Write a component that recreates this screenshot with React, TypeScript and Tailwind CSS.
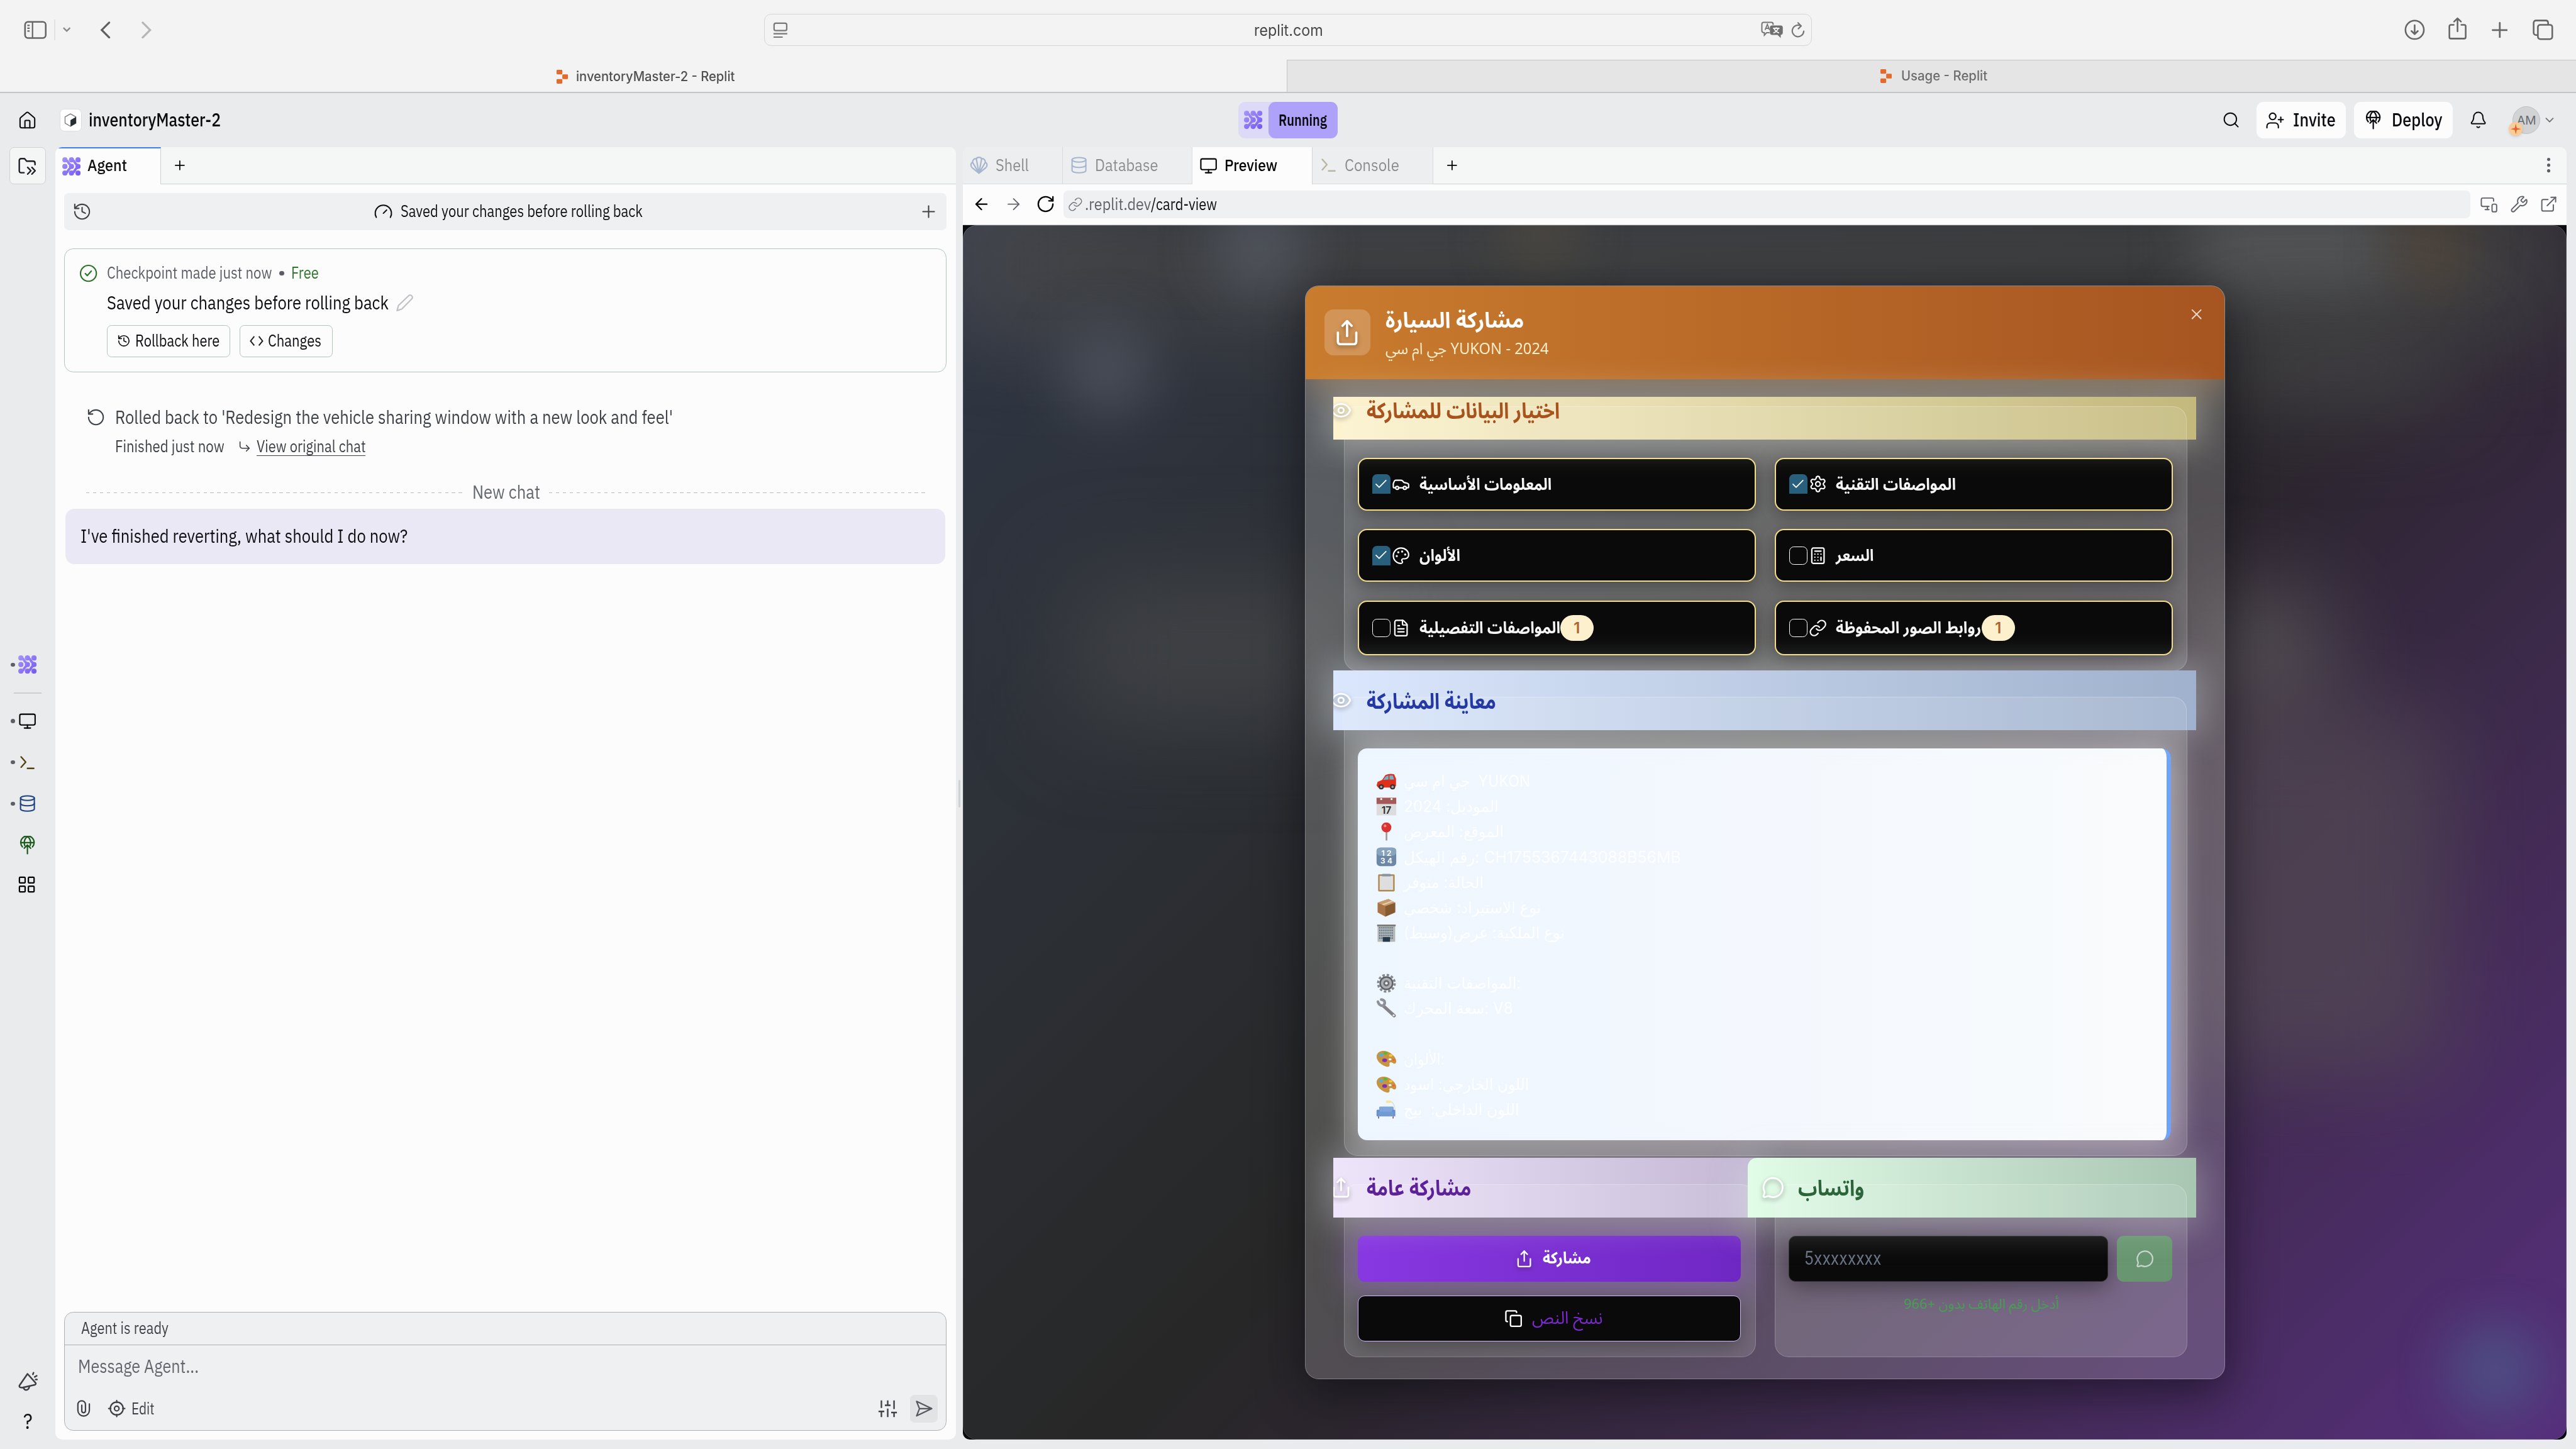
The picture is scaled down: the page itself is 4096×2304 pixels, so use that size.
import React, { useLayoutEffect, useRef } from "react";
import {
  ArrowLeft, ArrowRight, Bell, Calculator, Car, Check, ChevronDown,
  Copy, CornerDownRight, Database, EllipsisVertical, ExternalLink, Eye, FileText, Gauge, History, House,
  LayoutGrid, Link, MessageCircle, Monitor, MonitorSmartphone, Palette, Plus,
  RotateCcw, RotateCw, Search, Settings, Share, UserPlus, Wrench, X,
} from "lucide-react";

/* Text line condensed or widened to an exact advance width. */
function T({ w, className = "", children }: { w: number; className?: string; children: React.ReactNode }) {
  const outer = useRef<HTMLSpanElement>(null);
  const inner = useRef<HTMLSpanElement>(null);
  useLayoutEffect(() => {
    const o = outer.current;
    const i = inner.current;
    if (!o || !i) return;
    i.style.transform = "none";
    const k = o.getBoundingClientRect().width / i.getBoundingClientRect().width;
    i.style.transform = `scaleX(${k})`;
  }, [w]);
  return (
    <span ref={outer} className={`inline-block shrink-0 text-left whitespace-pre ${className}`} style={{ width: w }}>
      <span ref={inner} className="inline-block origin-left">{children}</span>
    </span>
  );
}

const AR = "font-['SF_Arabic','Noto_Sans_Arabic','DejaVu_Sans',sans-serif]";
const SF = "font-['Inter','Roboto',sans-serif]";
const ICON_SHADOW = "drop-shadow-[0_2px_2px_rgba(0,0,0,.35)]";

function AgentIcon({ size = 16 }: { size?: number }) {
  return (
    <svg width={size} height={size} viewBox="0 0 16 16" className="shrink-0">
      <defs>
        <linearGradient id="ag" gradientUnits="userSpaceOnUse" x1="0" y1="0" x2="16" y2="16">
          <stop offset="0" stopColor="#a596fa" />
          <stop offset="1" stopColor="#7457f3" />
        </linearGradient>
      </defs>
      <g fill="url(#ag)">
        {[2.3, 8, 13.7].map((x) => [2.3, 8, 13.7].map((y) => <circle key={`${x}-${y}`} cx={x} cy={y} r="2.25" />))}
      </g>
      <g stroke="url(#ag)" strokeWidth="2.1" fill="none" strokeLinejoin="round">
        <path d="M2.300 2.300 4.400 3.200Q5.600 6 8.800 8 5.600 10 4.400 12.800L2.300 13.700" />
        <path d="M8 2.300 10.100 3.200Q11.300 6 14.300 8 11.300 10 10.100 12.800L8 13.700" />
      </g>
    </svg>
  );
}

function ReplitLogo() {
  return (
    <svg width="10" height="12" viewBox="0 0 10 12" className="shrink-0">
      <g fill="#e4692b">
        <rect x="0" y="0" width="5" height="4" rx="0.8" />
        <rect x="5" y="4" width="5" height="4" rx="0.8" />
        <rect x="0" y="8" width="5" height="4" rx="0.8" />
      </g>
    </svg>
  );
}

function DeployIcon({ size = 16 }: { size?: number }) {
  return (
    <svg width={size} height={size} viewBox="0 0 16 16" fill="none" stroke="currentColor" strokeWidth="1.2" strokeLinecap="round" strokeLinejoin="round" className="shrink-0">
      <path d="M3.600 9.600a5.800 5.800 0 1 1 8.800 0" />
      <path d="M2.400 6h11.200M5.700 8.600C4.600 5.600 5.600 2 8 .6c2.400 1.400 3.400 5 2.300 8" />
      <path d="M8 15.600V8M5.200 10.800 8 8l2.800 2.800" />
    </svg>
  );
}

function ShellIcon() {
  return (
    <svg width="16" height="16" viewBox="0 0 16 16" fill="none" stroke="currentColor" strokeWidth="1.200" strokeLinejoin="round" className="shrink-0">
      <path d="M8 15 2.200 10.300C.500 9 .700 6 2.500 5.600 2.400 3.400 4 2 5.700 2.500 6.300.700 9.700.700 10.300 2.500 12 2 13.600 3.400 13.500 5.600 15.300 6 15.500 9 13.800 10.300z" />
      <path d="M8 15 2.500 5.600M8 15 5.700 2.500M8 15l2.300-12.500M8 15l5.500-9.400" />
    </svg>
  );
}

function ConsoleIcon() {
  return (
    <svg width="16" height="16" viewBox="0 0 16 16" fill="none" stroke="currentColor" strokeWidth="1.300" strokeLinecap="round" strokeLinejoin="round" className="shrink-0">
      <path d="M2.500 3 6.500 7.500 2.500 12M8 13h5.500" />
    </svg>
  );
}

function FolderIcon() {
  return (
    <svg width="16" height="16" viewBox="0 0 16 16" fill="none" stroke="#1d2026" strokeWidth="1.300" strokeLinecap="round" strokeLinejoin="round">
      <path d="M5 14H2.500C1.500 14 .9 13.400.9 12.500V3.300C.9 2.400 1.500 1.800 2.500 1.800h3l1.800 2.200h5.600c1 0 1.700.7 1.700 1.700V7" />
      <path d="M8.200 9.400l2.800 2.900-2.800 2.900M11.900 9.400l2.800 2.900-2.800 2.900" />
    </svg>
  );
}

function MegaphoneIcon() {
  return (
    <svg width="17" height="17" viewBox="0 0 16 16" fill="none" stroke="#3c3f45" strokeWidth="1.300" strokeLinecap="round" strokeLinejoin="round">
      <path d="M7.600 1.800 1 11.300c-.3.600 0 1.400.7 1.600l1.500.2 10.300-2.300c.8-.2 1-.9.800-1.500z" />
      <path d="M4.300 12.900c.6 3 4.300 2.900 4.900-1M12 2.200l.5-1.300M13.500 4.300l1.600-.9M14.200 6.400h1.200" />
    </svg>
  );
}

/* Small colour pictograms of the share text. */
const pictograms: Record<string, React.ReactNode> = {
  car: (
    <>
      <path d="M.5 14 1.500 10.500 6 8.500 9 4Q13 2 17.500 3.200L19.300 7.500V14.500L17 16H2Z" fill="#e0301c" />
      <path d="M7 8.500 9.700 5 12 4.200v4zM13 4.200h3.200l1.200 4H13z" fill="#6fb4c9" />
      <circle cx="5" cy="15.300" r="2.500" fill="#3b3434" /><circle cx="16" cy="15.300" r="2.500" fill="#3b3434" />
      <circle cx="5" cy="15.300" r="1.100" fill="#aaa" /><circle cx="16" cy="15.300" r="1.100" fill="#aaa" />
    </>
  ),
  calendar: (
    <>
      <rect x=".5" y="1.500" width="19" height="17" fill="#dcdcdc" />
      <rect x=".5" y="1.500" width="19" height="6" fill="#a45a58" />
      <text x="10" y="16.800" fontSize="9.500" textAnchor="middle" fill="#2b2b2b" fontFamily="Inter" fontWeight="600">17</text>
      <circle cx="5" cy="2.800" r="1" fill="#fff" /><circle cx="15" cy="2.800" r="1" fill="#fff" />
    </>
  ),
  pin: (
    <>
      <rect x="9.300" y="8" width="1.600" height="10.500" fill="#a5958f" />
      <circle cx="10" cy="5.800" r="4.800" fill="#d9342f" /><circle cx="8.700" cy="4.400" r="1.300" fill="#f08a85" />
    </>
  ),
  numbers: (
    <>
      <rect x=".5" y="1" width="19" height="18" rx="3.500" fill="#6d88a6" />
      <rect x=".5" y="1" width="19" height="8" rx="3.500" fill="#88a3be" />
      <text x="10" y="9" fontSize="7.500" textAnchor="middle" fill="#fff" fontFamily="Inter" fontWeight="600">1 2</text>
      <text x="10" y="16.600" fontSize="7.500" textAnchor="middle" fill="#fff" fontFamily="Inter" fontWeight="600">3 4</text>
    </>
  ),
  clipboard: (
    <>
      <rect x="2" y="2" width="16" height="16.500" rx="1" fill="#b08a4e" />
      <rect x="3.500" y="3.500" width="13" height="13.500" fill="#dedede" /><rect x="5.500" y="1.500" width="9" height="2.500" rx="1" fill="#8b93a0" />
    </>
  ),
  box: (
    <>
      <path d="M1.500 5 12 1.500 18.500 5V14.500L9 18.500 1.500 14.500z" fill="#a87446" />
      <path d="M9 8.300 18.500 5v9.500L9 18.500z" fill="#865a33" />
      <path d="M1.500 5 12 1.500 18.500 5 9 8.300z" fill="#c99c6d" /><path d="M5.500 6.700 15 3.200l1.500.8L7.200 7.500z" fill="#e5cfb0" />
    </>
  ),
  building: (
    <>
      <rect x="1.500" y="2" width="17" height="16.500" fill="#b3b6b2" />
      <path d="M3 5h14M3 7.500h14M3 10h14M3 12.500h14M3 15h14" stroke="#55718a" strokeWidth="1.300" strokeDasharray="1.200 .8" />
      <rect x="1" y="2" width="18" height="1.500" fill="#77756f" /><rect x="6.500" y="14" width="7" height="4.500" fill="#26394b" />
    </>
  ),
  gear: (
    <>
      <circle cx="10" cy="10" r="8" fill="none" stroke="#85888c" strokeWidth="2.200" strokeDasharray="2.400 1.790" />
      <circle cx="10" cy="10" r="6" fill="#aeb0b3" stroke="#5e6164" strokeWidth="1.500" />
      <circle cx="10" cy="10" r="3" fill="#6c6f73" /><circle cx="10" cy="10" r="1.300" fill="#eee" />
    </>
  ),
  wrench: (
    <>
      <path d="M7 7.500 17.500 17" stroke="#85838a" strokeWidth="3.200" strokeLinecap="round" />
      <path d="M1.800 3.500Q3 7.500 6.500 7.500 9 6 8.200 3.200 7 1.500 5 1.500" stroke="#8f9198" strokeWidth="2.600" fill="none" strokeLinecap="round" />
      <circle cx="17" cy="16.600" r="1" fill="#e8e8ee" />
    </>
  ),
  palette: (
    <>
      <path d="M.6 7C1.600 2 8 1.500 12 3.500c4.500 2.200 8 6.500 7.500 9.500-.4 2.200-2.300 2.200-3.500 1-1.500-1.300-3.500-.5-3 1.200.6 2-1 3.300-3.500 2.300C4 15.500 0 11.500.6 7z" fill="#c9943f" />
      <ellipse cx="5" cy="6.500" rx="2" ry="1.500" fill="#4db1de" /><ellipse cx="9" cy="4.600" rx="1.900" ry="1.300" fill="#55b934" />
      <ellipse cx="14.200" cy="6.800" rx="1.800" ry="1.200" fill="#eec93f" /><ellipse cx="8.300" cy="11.500" rx="2.300" ry="1.700" fill="#7a2fc0" />
      <ellipse cx="17" cy="11" rx="1.500" ry="1" fill="#e8663f" /><ellipse cx="13.500" cy="10.500" rx="1.500" ry="1" fill="#f2f6fc" />
    </>
  ),
  sofa: (
    <>
      <path d="M14 2.200Q19 3 18.700 17" fill="none" stroke="#dcdad2" strokeWidth=".8" /><rect x="9.500" y="1" width="5" height="2.500" rx="1" fill="#f7e49e" />
      <rect x="3" y="7" width="14" height="7" rx="1" fill="#7fa6dc" /><rect x=".5" y="10" width="3" height="6.500" rx="1" fill="#6690cc" />
      <rect x="15.500" y="10" width="3" height="6.500" rx="1" fill="#6690cc" /><rect x="2" y="12" width="15" height="4.500" fill="#7199d4" />
      <path d="M2.500 16.500v2M16.500 16.500v2" stroke="#7c6142" strokeWidth="1" />
    </>
  ),
};

const shareLines: ([string, string, number] | null)[] = [
  ["car", "جي ام سي  YUKON", 110],
  ["calendar", "الموديل: 2024", 82.5],
  ["pin", "الموقع: المعرض", 87],
  ["numbers", "رقم الهيكل: CH1755367443088B56MB", 241],
  ["clipboard", "الحالة: متوفر", 69.5],
  ["box", "نوع الاستيراد: شخصي", 119.5],
  ["building", "نوع الملكية: عرض(وسيط)", 140],
  null,
  ["gear", "المواصفات التقنية:", 102],
  ["wrench", "سعة المحرك: V8", 95],
  null,
  ["palette", "الألوان:", 35.5],
  ["palette", "اللون الخارجي: اسود", 109],
  ["sofa", "اللون الداخلي:  بيج", 100.5],
];

type Option = { icon: typeof Car; label: string; w: number; on: boolean; badge?: boolean };
const options: Option[] = [
  { icon: Car, label: "المعلومات الأساسية", w: 115, on: true },
  { icon: Settings, label: "المواصفات التقنية", w: 104.5, on: true },
  { icon: Palette, label: "الألوان", w: 35.5, on: true },
  { icon: Calculator, label: "السعر", w: 33, on: false },
  { icon: FileText, label: "المواصفات التفصيلية", w: 122.5, on: false, badge: true },
  { icon: Link, label: "روابط الصور المحفوظة", w: 126.5, on: false, badge: true },
];

function OptionCard({ icon: Icon, label, w, on, badge }: Option) {
  return (
    <div className={`flex ${badge ? "h-12" : "h-[46px]"} items-center rounded-lg border-[1.5px] border-[#f3dd85] bg-[#0a0a0a] pl-[11.500px] shadow-[0_4px_14px_rgba(40,40,40,.5)]`}>
      {on ? (
        <span className="flex h-[17px] w-4 items-center justify-center rounded-t bg-[#285f7c] text-white"><Check size={13} strokeWidth={1.800} /></span>
      ) : (
        <span className="h-4 w-4 rounded border border-white" />
      )}
      <Icon size={16} strokeWidth={1.800} className="ml-px text-white" />
      <T w={w} className={`mt-px ml-2 text-[14px] leading-5 font-bold text-[#f6f6f6] ${AR}`}>{label}</T>
      {badge && <span className={`flex h-[22px] w-[29px] items-center justify-center rounded-full bg-[#fdf1cd] text-[13px] font-semibold text-[#b0622e] ${SF}`}>1</span>}
    </div>
  );
}

function BrowserChrome() {
  return (
    <>
      <div className="flex h-[52px] shrink-0 items-center bg-[#f3f3f3] text-[#6a6a6a]">
        <svg width="20" height="16" viewBox="0 0 20 16" fill="none" stroke="#666" strokeWidth="1.400" className="ml-[21px]">
          <rect x="1" y="1" width="18" height="14" rx="2.5" /><path d="M7.500 1v14M3 4h2M3 6.500h2M3 9h2" strokeWidth="1.200" />
        </svg>
        <span className="ml-[6px] h-[18px] w-px bg-[#e2e2e2]" />
        <ChevronDown size={10} strokeWidth={3.2} className="ml-[5px] text-[#8a8a8a]" />
        <svg width="9" height="15" viewBox="0 0 9 15" fill="none" stroke="#5f5f5f" strokeWidth="1.700" strokeLinecap="round" className="ml-6"><path d="M8 1 1.500 7.500 8 14" /></svg>
        <svg width="9" height="15" viewBox="0 0 9 15" fill="none" stroke="#b5b5b5" strokeWidth="1.700" strokeLinecap="round" className="ml-[27px]"><path d="M1 1 7.500 7.500 1 14" /></svg>
        <div className="ml-[532.500px] flex h-7 w-[911px] items-center rounded-md border border-[#d5d5d5]">
          <svg width="13" height="14" viewBox="0 0 13 14" fill="none" stroke="#777" strokeWidth="1.200" className="ml-[7px]">
            <rect x="1" y="1" width="11" height="6.500" rx="1.500" /><path d="M.5 10.200h12M.5 13.200h8" />
          </svg>
          <T w={60} className={`mt-px ml-[405.500px] text-[13.500px] text-[#484848] ${SF}`}>replit.com</T>
          <svg width="20" height="15" viewBox="0 0 20 15" className="ml-[381px]">
            <path d="M2.500.8h6.400c1 0 1.700.7 1.700 1.700V3M7.500 9.800H5L3 12V9.800H2.500C1.500 9.800.8 9 .8 8.100V2.500C.8 1.500 1.500.8 2.500.8" fill="none" stroke="#777" strokeWidth="1.100" />
            <path d="M3.600 7.500 5.600 2.600 7.500 7.500M4.300 6h2.500" fill="none" stroke="#777" strokeWidth="1" />
            <path d="M9.500 3.500h7.700c1.200 0 1.800.7 1.800 1.800v4.600c0 1.100-.6 1.800-1.800 1.800V14.500L14.500 11.700h-5C8.400 11.700 7.800 11 7.800 9.900V5.300c0-1.100.6-1.800 1.700-1.800z" fill="#6f6f6f" />
            <path d="M10.500 6h5.600M13.300 5v1M15 6Q14 9 10.800 10M11.500 6.300Q12.500 9 15.800 10" stroke="#f3f3f3" strokeWidth="1" fill="none" />
          </svg>
          <svg width="12" height="14" viewBox="0 0 12 14" fill="none" stroke="#777" strokeWidth="1.200" strokeLinecap="round" className="ml-[6px]">
            <path d="M8.500 3.400A5 5 0 1 0 11 8M6 .700 8.700 3.400 6.300 5.800" />
          </svg>
        </div>
        <svg width="18" height="18" viewBox="0 0 18 18" fill="none" stroke="#666" strokeWidth="1.400" strokeLinecap="round" strokeLinejoin="round" className="ml-[515.500px]">
          <circle cx="9" cy="9" r="8" /><path d="M9 5v7.500M6.200 10 9 12.700 11.800 10" />
        </svg>
        <svg width="16" height="20" viewBox="0 0 16 20" fill="none" stroke="#666" strokeWidth="1.400" strokeLinecap="round" strokeLinejoin="round" className="-mt-0.5 ml-[20px]">
          <path d="M4.700 6.800H2.200c-.8 0-1.300.5-1.300 1.300v9.400c0 .8.500 1.300 1.300 1.300h11.600c.8 0 1.300-.5 1.300-1.300V8.100c0-.8-.5-1.300-1.300-1.300h-2.500M8 12.500V1.200M5 4 8 1.200 11 4" />
        </svg>
        <svg width="14" height="14" viewBox="0 0 14 14" stroke="#666" strokeWidth="1.500" strokeLinecap="round" className="ml-[21.500px]"><path d="M7 .8v12.400M.8 7h12.400" /></svg>
        <svg width="18" height="18" viewBox="0 0 18 18" fill="none" stroke="#666" strokeWidth="1.400" className="ml-[22px]">
          <path d="M4.500 13.500H3C1.700 13.500.9 12.700.9 11.500V3C.9 1.700 1.700.9 3 .9h8.500c1.200 0 2 .8 2 2.100v1.500" /><rect x="4.600" y="4.600" width="12.500" height="12.500" rx="2" />
        </svg>
      </div>
      <div className="flex h-7 shrink-0 bg-[#f3f3f3]">
        <div className="flex w-[1119px] items-center justify-center gap-[7px] pt-px pl-1">
          <ReplitLogo />
          <T w={138} className={`text-[11.500px] font-medium text-[#505050] ${SF}`}>inventoryMaster-2 - Replit</T>
        </div>
        <div className="flex flex-1 items-center justify-center gap-[8px] border-t border-l border-[#c6c6c6] bg-[#e5e5e5] pl-1">
          <ReplitLogo />
          <T w={75} className={`text-[11.500px] font-medium text-[#6d6d6d] ${SF}`}>Usage - Replit</T>
        </div>
      </div>
      <div className="h-px shrink-0 bg-[#c4c5c6]" />
    </>
  );
}

function Header() {
  return (
    <div className="flex h-[47px] shrink-0 items-center text-[#0b0c0f]">
      <House size={17} strokeWidth={1.600} className="ml-[15.500px]" />
      <span className="ml-[19.500px] flex h-5 w-[19px] items-center justify-center rounded border border-[#dcdddf] bg-white">
        <svg width="11" height="12" viewBox="0 0 11 12"><path d="M5.500.6 10.200 3.200v5.500L5.500 11.400.8 8.700V3.200z" fill="#fff" stroke="#777" strokeWidth=".7" /><path d="M5.500 6 10.400 3.200v5.600L5.500 11.600z" fill="#262d33" /></svg>
      </span>
      <T w={115} className="ml-[6px] text-[16px] font-medium">inventoryMaster-2</T>
      <div className="ml-[885px] flex h-8 w-[86px] rounded-md bg-[#dddaf7]">
        <span className="flex w-[26px] items-center justify-center"><AgentIcon /></span>
        <span className="flex flex-1 items-center justify-center rounded-md bg-[#aea1f9]"><T w={42} className="text-[14px] font-semibold">Running</T></span>
      </div>
      <Search size={16} strokeWidth={1.600} className="ml-[769px]" />
      <div className="ml-[14px] flex h-8 w-[78px] items-center rounded-md bg-[#fcfcfc]">
        <UserPlus size={17} strokeWidth={1.600} className="ml-2" />
        <T w={37} className="ml-[7px] text-[16px] font-medium">Invite</T>
      </div>
      <div className="ml-[7px] flex h-8 w-[86px] items-center rounded-md bg-[#fcfcfc]">
        <span className="ml-[9px]"><DeployIcon /></span>
        <T w={44} className="ml-2 text-[16px] font-medium">Deploy</T>
      </div>
      <Bell size={16} strokeWidth={1.600} className="ml-[14px]" />
      <div className={`relative ml-[22px] flex h-6 w-6 items-center justify-center rounded-full border border-[#bfc0c2] bg-[#d2d3d4] text-[10.500px] text-[#686b70] ${SF}`}>
        AM
        <span className="absolute top-[13px] -left-1 flex h-3 w-3 items-center justify-center rounded-full bg-[#fbcb98] shadow">
          <svg width="9" height="9" viewBox="0 0 9 9"><path d="M4.500 0 5.400 3.600 9 4.500 5.400 5.400 4.500 9 3.600 5.400 0 4.500 3.600 3.600z" fill="#e4632a" /></svg>
        </span>
      </div>
      <ChevronDown size={12} strokeWidth={2} className="ml-[2px] text-[#6e7177]" />
    </div>
  );
}

function Rail() {
  const dot = <span className="h-[3.5px] w-[3.5px] shrink-0 rounded-full bg-[#5c5f66]" />;
  return (
    <div className="flex w-12 shrink-0 flex-col">
      <span className="ml-2 flex h-8 w-8 items-center justify-center rounded border border-[#d0d1d3] bg-[#f4f5f5]"><FolderIcon /></span>
      <div className="mt-[410px] flex h-4 items-center gap-[3px] pl-[9.500px]">{dot}<AgentIcon /></div>
      <span className="mt-4 ml-3 h-px w-6 bg-[#cdced0]" />
      <div className="mt-4 flex h-4 items-center gap-[3px] pl-[9.500px] text-black">{dot}<Monitor size={16} strokeWidth={1.700} /></div>
      <div className="mt-5 flex h-4 items-center gap-[3px] pl-[9.500px] text-[#524310]">{dot}<ConsoleIcon /></div>
      <div className="mt-5 flex h-4 items-center gap-[3px] pl-[9.500px] text-[#1c4381]">{dot}<Database size={16} strokeWidth={1.700} /></div>
      <div className="mt-5 ml-4 flex h-4 items-center text-[#1c5a1c]"><DeployIcon /></div>
      <div className="mt-[18px] ml-4 flex h-4 items-center text-black"><LayoutGrid size={17} strokeWidth={1.700} className="-ml-px shrink-0" /></div>
      <div className="mt-[416px] ml-4"><MegaphoneIcon /></div>
      <T w={8} className="mt-[14px] ml-5 text-[19px] leading-6 text-[#111]">?</T>
    </div>
  );
}

function AgentPane() {
  return (
    <div className="flex h-[1124px] w-[783px] shrink-0 flex-col overflow-hidden rounded-md bg-[#fcfcfc]">
      <div className="flex h-8 shrink-0 bg-[#f5f7f6]">
        <div className="flex w-[92px] items-center border-t-[1.5px] border-r border-t-[#3f80f0] border-r-[#cfd1d2] bg-[#fcfcfc] pl-[6px]">
          <AgentIcon />
          <T w={34.500} className="-mt-px ml-[6px] text-[14px] font-medium text-[#111]">Agent</T>
        </div>
        <div className="flex flex-1 items-center border-b border-[#cfd1d2] pl-[10px]"><Plus size={13} strokeWidth={1.800} /></div>
      </div>
      <div className="mt-2 ml-2 flex h-8 w-[767px] shrink-0 items-center rounded bg-[#eff0f2] text-[#3f4247]">
        <History size={17} strokeWidth={1.600} className="ml-[7px]" />
        <Gauge size={17} strokeWidth={1.600} className="ml-[245px] text-[#111]" />
        <T w={210.500} className="ml-[6.500px] text-[14px] text-[#111]">Saved your changes before rolling back</T>
        <Plus size={17} strokeWidth={1.600} className="ml-[240px]" />
      </div>
      <div className="mt-4 ml-2 h-[108px] w-[767px] shrink-0 rounded-lg border border-[#b1c6b9] px-[12.500px] pt-[12px]">
        <div className="flex h-[18px] items-center text-[14px] text-[#5a5d63]">
          <svg width="16" height="16" viewBox="0 0 16 16" fill="none" stroke="#2c7529" strokeWidth="1.200" strokeLinecap="round" strokeLinejoin="round"><circle cx="8" cy="8" r="6.900" /><path d="M5.300 8.200 7 10l3.500-4" /></svg>
          <T w={143.500} className="ml-[8px]">Checkpoint made just now</T>
          <span className="ml-[6.500px] h-1 w-1 rounded-full bg-[#5a5d63]" />
          <T w={24} className="ml-[6px] text-[#2f752c]">Free</T>
        </div>
        <div className="mt-[5px] ml-6 flex h-6 items-center">
          <T w={245} className="text-[16px] text-[#0c0d10]">Saved your changes before rolling back</T>
          <svg width="16" height="16" viewBox="0 0 16 16" fill="none" stroke="#bfc1c4" strokeWidth="1.200" strokeLinejoin="round" className="ml-[6px]"><path d="M1.300 14.700 2.500 10.300 11.500 1.600c1.700-1.300 4 .900 2.700 2.800L5.500 13.300z" /></svg>
        </div>
        <div className="mt-[7px] ml-6 flex gap-[8.500px] text-[14px] text-[#0c0d10]">
          <div className="flex h-7 w-[107px] items-center rounded border border-[#b1c6b9] pl-[8px]"><History size={12} strokeWidth={1.800} /><T w={73.500} className="ml-[4px]">Rollback here</T></div>
          <div className="flex h-7 w-[81px] items-center rounded border border-[#b1c6b9] pl-[8px]">
            <svg width="12" height="10" viewBox="0 0 12 10" fill="none" stroke="#222" strokeWidth="1.100"><path d="M4 1 .8 5 4 9M8 1l3.200 4L8 9" /></svg>
            <T w={46.500} className="ml-[4px]">Changes</T></div>
        </div>
      </div>
      <div className="mt-[27px] ml-[27px] flex h-6 shrink-0 items-center text-[#3e4147]">
        <RotateCcw size={17} strokeWidth={1.600} />
        <T w={485} className="ml-2 text-[16px]">Rolled back to 'Redesign the vehicle sharing window with a new look and feel'</T>
      </div>
      <div className="mt-[3.500px] ml-[52px] flex h-5 shrink-0 items-center text-[14px] text-[#3e4147]">
        <T w={95}>Finished just now</T>
        <CornerDownRight size={12} strokeWidth={1.800} className="ml-[12px]" />
        <T w={95} className="ml-[4px] border-b border-[#3e4147] leading-[16px]">View original chat</T>
      </div>
      <div className="mt-[18px] ml-[27px] flex h-6 w-[730px] shrink-0 items-center gap-2 text-[#63666c]">
        <span className="h-px flex-1 bg-[repeating-linear-gradient(90deg,#b9bbbe_0_3px,transparent_3px_6px)]" />
        <T w={59} className="text-[16px]">New chat</T>
        <span className="h-px flex-1 bg-[repeating-linear-gradient(90deg,#b9bbbe_0_3px,transparent_3px_6px)]" />
      </div>
      <div className="mt-[2px] ml-[9px] flex h-12 w-[765px] shrink-0 items-center rounded-lg bg-[#eae8f4] pl-[13px]">
        <T w={284.500} className="text-[16px] text-[#0c0d10]">I've finished reverting, what should I do now?</T>
      </div>
      <div className="mt-auto mb-2 ml-2 flex h-[103px] w-[767px] shrink-0 flex-col rounded-lg border border-[#adb0b3] bg-[#eff0f2]">
        <div className="flex h-[28px] items-center border-b border-[#adb0b3] pl-[14px]"><T w={76} className="text-[14px] text-[#3e4147]">Agent is ready</T></div>
        <T w={105} className="mt-[7px] ml-[11px] text-[16px] text-[#63666c]">Message Agent...</T>
        <div className="mt-auto mb-[6.500px] flex h-6 items-center text-[#3e4147]">
          <svg width="12" height="15" viewBox="0 0 12 15" fill="none" stroke="#3e4147" strokeWidth="1.200" strokeLinecap="round" className="ml-[10px]"><path d="M11 3.500V9a5 5 0 0 1-10 0V4a3.300 3.300 0 0 1 6.600 0v5.500a1.600 1.600 0 0 1-3.200 0V4.500" /></svg>
          <svg width="16" height="16" viewBox="0 0 16 16" fill="none" stroke="#3e4147" strokeWidth="1.200" strokeLinecap="round" className="ml-[15px]"><circle cx="8" cy="8" r="5.600" /><circle cx="8" cy="8" r="2" /><path d="M8 1v1.800M8 13.200V15M1 8h1.800M13.200 8H15" /></svg>
          <T w={20} className="ml-[5px] text-[14px]">Edit</T>
          <svg width="17" height="16" viewBox="0 0 17 16" fill="none" stroke="#3e4147" strokeWidth="1.300" className="ml-[629px]"><path d="M3 1v6.500M3 11v4.500M.5 10.500h5M8.500 1v3.500M6 5.200h5M8.500 8v7.500M14 1v7.500M14 12v3.500M11.500 11.500h5" /></svg>
          <span className="ml-[11px] flex h-6 w-6 items-center justify-center rounded bg-[#e2e3e5]">
            <svg width="15" height="14" viewBox="0 0 15 14" fill="none" stroke="#54575d" strokeWidth="1.200" strokeLinejoin="round"><path d="M.8.700 14 7 .8 13.300 3.300 7z M3.300 7H14" /></svg>
          </span>
        </div>
      </div>
    </div>
  );
}

function ShareDialog() {
  const glass = "rounded-xl border border-white/20 bg-white/14";
  /* Outline of the card showing through its translucent heading band. */
  const ghost = "pointer-events-none absolute bottom-0 rounded-t-xl border-t border-r border-white/25 bg-white/10";
  return (
    <div className="absolute top-[52.500px] left-[297.500px] flex h-[951px] w-[800px] flex-col overflow-hidden rounded-xl border border-white/25 bg-[linear-gradient(155deg,rgba(255,255,255,.22)_0%,rgba(225,225,215,.22)_50%,rgba(200,190,210,.24)_100%)] shadow-[0_10px_40px_rgba(10,10,15,.6)]">
      <div className="relative flex h-[80.500px] shrink-0 bg-linear-to-r from-[#c97c2e] to-[#a65521] shadow-[0_10px_26px_rgba(200,150,100,.45)]">
        <span className="mt-[20px] ml-4 flex h-10 w-10 items-center justify-center rounded-lg bg-white/20 text-white"><Share size={24} strokeWidth={2} className={ICON_SHADOW} /></span>
        <div className="ml-[13px] flex flex-col">
          <T w={120.500} className={`mt-[16px] text-[19px] leading-[28px] font-bold text-white ${AR}`}>مشاركة السيارة</T>
          <T w={142} className={`mt-px text-[14px] leading-[19px] text-[#fdeecb] ${AR}`}>جي ام سي YUKON - 2024</T>
        </div>
        <X size={15} strokeWidth={1.800} className="mt-[17px] ml-auto mr-[17px] text-[#ecd6c6]" />
      </div>

      <div className={`mt-[24px] ml-[33px] h-[230px] w-[733.500px] shrink-0 ${glass}`}>
        <div className="relative -mt-[9px] -ml-[9.500px] flex h-[37px] w-[750px] items-start overflow-hidden bg-linear-to-r from-[#fdf3cf] to-[#c3b97c] shadow-[0_0_28px_6px_rgba(255,255,240,.3)]">
          <span className={`${ghost} top-2 right-2 left-2`} />
          <Eye size={19} strokeWidth={1.900} className={`relative mt-[2px] -ml-[3px] shrink-0 text-white ${ICON_SHADOW}`} />
          <T w={168} className={`relative mt-px ml-[13px] text-[19px] leading-[23px] font-bold text-[#a8531e] ${AR}`}>اختيار البيانات للمشاركة</T>
        </div>
        <div className="mt-4 grid grid-cols-2 gap-4 pr-[12px] pl-[11.500px]">
          {options.map((o) => <OptionCard key={o.label} {...o} />)}
        </div>
      </div>

      <div className={`mt-[23.500px] ml-[33px] h-[398px] w-[733.500px] shrink-0 ${glass}`}>
        <div className="relative -mt-[24.500px] -ml-[9.500px] flex h-[52px] w-[750px] items-center overflow-hidden bg-linear-to-r from-[#dbe7fc] to-[#9fb1cc] shadow-[0_0_28px_6px_rgba(240,245,255,.3)]">
          <span className={`${ghost} top-[23px] right-2 left-2`} />
          <Eye size={19} strokeWidth={1.900} className={`relative -ml-[3px] shrink-0 text-white ${ICON_SHADOW}`} />
          <T w={112.500} className={`relative mt-[3px] ml-[13px] text-[19px] leading-[26px] font-bold text-[#2439a3] ${AR}`}>معاينة المشاركة</T>
        </div>
        <div className="mt-4 ml-[11.500px] h-[340.500px] w-[707.500px] rounded-lg border-r-4 border-[#6ea3f7] bg-linear-to-r from-[#eef6ff] via-[#f4f8fe] to-[#f9fbfc] pt-[17.500px] pl-4 shadow-[0_0_26px_6px_rgba(255,255,255,.42)]">
          {shareLines.map((l, i) => (
            <div key={i} className="flex h-[21.950px] items-center">
              {l && (
                <>
                  <svg width="18" height="18" viewBox="0 0 20 20" className="shrink-0">{pictograms[l[0]]}</svg>
                  <T w={l[2]} className="ml-[6px] text-[14px] leading-5 text-[#fdfeff] font-['Inter','DejaVu_Sans',sans-serif]">{l[1]}</T>
                </>
              )}
            </div>
          ))}
        </div>
      </div>

      <div className="mt-[25px] ml-[33px] flex gap-4">
        <div className={`h-[150px] w-[358.500px] shrink-0 ${glass}`}>
          <div className="relative -mt-[24px] -ml-[9.500px] flex h-[52px] w-[367px] items-center overflow-hidden bg-linear-to-r from-[#efe5fb] to-[#c3b7d4] shadow-[0_0_28px_6px_rgba(245,240,255,.3)]">
            <span className={`${ghost} top-[23px] right-0 left-2`} />
            <Share size={19} strokeWidth={1.900} className={`relative -ml-[3px] shrink-0 text-white ${ICON_SHADOW}`} />
            <T w={91} className={`relative mt-[3px] ml-[13px] text-[19px] leading-[26px] font-bold text-[#5d2298] ${AR}`}>مشاركة عامة</T>
          </div>
          <div className="mt-4 ml-[11.500px] flex h-10 w-[333px] items-center justify-center gap-2 rounded-md bg-linear-to-r from-[#8838e1] to-[#6f27c4] pl-[7px] text-white shadow-[0_0_26px_8px_rgba(150,95,205,.5)]">
            <Share size={16} strokeWidth={1.900} className={ICON_SHADOW} />
            <T w={42} className={`text-[14px] font-bold ${AR}`}>مشاركة</T>
          </div>
          <div className="mt-3 ml-[11.500px] flex h-10 w-[333px] items-center justify-center gap-2 rounded-md border border-[#d3b5fb] bg-[#0a0a0a] pl-[8px] shadow-[0_5px_16px_rgba(60,60,60,.6)]">
            <Copy size={16} strokeWidth={1.900} className="text-white" />
            <T w={61.500} className={`text-[15px] text-[#7a2bd0] ${AR}`}>نسخ النص</T>
          </div>
        </div>
        <div className={`h-[150px] w-[359px] shrink-0 ${glass}`}>
          <div className="relative -mt-[24px] -ml-[24px] flex h-[52px] w-[390px] items-center overflow-hidden rounded-tl-lg bg-linear-to-r from-[#e1fce7] to-[#a9c6b3] shadow-[0_6px_28px_6px_rgba(235,250,240,.25)]">
            <span className={`${ghost} top-[23px] right-2 left-6`} />
            <MessageCircle size={20} strokeWidth={1.800} className={`relative ml-[12px] shrink-0 text-white ${ICON_SHADOW}`} />
            <T w={57.500} className={`relative mt-[3px] ml-[12px] text-[19px] leading-[26px] font-bold text-[#2b6539] ${AR}`}>واتساب</T>
          </div>
          <div className="mt-4 ml-[12px] flex gap-2">
            <div className="flex h-10 w-[277.500px] items-center rounded-md border border-[#303030] bg-[#0a0a0a] pl-[13px] shadow-[0_4px_20px_rgba(50,45,55,.7)]">
              <T w={67} className={`text-[16px] text-[#6b7485] ${SF}`}>5xxxxxxxx</T>
            </div>
            <div className="flex h-10 w-12 items-center justify-center rounded-md bg-[#679670] text-[#c6d6c9]"><MessageCircle size={16} strokeWidth={1.900} /></div>
          </div>
          <T w={135} className={`mt-[12px] ml-[112px] text-[12px] leading-[16px] text-[#46a052] ${AR}`}>أدخل رقم الهاتف بدون +966</T>
        </div>
      </div>
    </div>
  );
}

function PreviewPane() {
  const tab = "flex h-8 items-center border-r border-b border-[#d9dbdd] bg-[#eceeef] pl-[6px] text-[14px] text-[#8b8d90]";
  return (
    <div className="flex h-[1124px] w-[1394.500px] shrink-0 flex-col overflow-hidden rounded-md bg-[#fcfcfc]">
      <div className="flex h-8 shrink-0 bg-[#f5f7f6]">
        <div className={`${tab} w-[86.500px]`}><span className="text-[#a7b5cf]"><ShellIcon /></span><T w={29} className="ml-[6px]">Shell</T></div>
        <div className={`${tab} w-[113px]`}><Database size={16} strokeWidth={1.700} className="text-[#a7b5cf]" /><T w={55} className="ml-[6px]">Database</T></div>
        <div className="flex h-8 w-[104.500px] items-center border-r border-[#d3d5d6] bg-[#fcfcfc] pl-[6px] text-[14px] font-medium text-black"><Monitor size={16} strokeWidth={1.700} /><T w={46} className="ml-[6px]">Preview</T></div>
        <div className={`${tab} w-[105px]`}><span className="text-[#b9b5a3]"><ConsoleIcon /></span><T w={47.500} className="ml-[6px]">Console</T></div>
        <div className="flex flex-1 items-center border-b border-[#cfd1d2] pl-[9.500px]"><Plus size={13} strokeWidth={1.800} /><EllipsisVertical size={17} className="mr-[7px] ml-auto text-[#5c5f66]" /></div>
      </div>
      <div className="flex h-[36px] shrink-0 items-center border-b border-[#d3d4d6]">
        <ArrowLeft size={16} strokeWidth={1.800} className="ml-2 text-black" />
        <ArrowRight size={16} strokeWidth={1.600} className="ml-[12px] text-[#63666c]" />
        <RotateCw size={17} strokeWidth={1.800} className="ml-[11.500px] text-black" />
        <div className="ml-[7px] flex h-6 w-[1223px] items-center rounded bg-[#eff0f2] pl-[3.500px] text-[14px]">
          <Link size={13} strokeWidth={1.600} className="text-[#777a80]" />
          <T w={57.500} className="ml-[2px] text-[#5f6268]">.replit.dev</T>
          <T w={57.500} className="text-[#0c0d10]">/card-view</T>
        </div>
        <MonitorSmartphone size={16} strokeWidth={1.600} className="ml-[8.500px] text-[#5f6268]" />
        <Wrench size={16} strokeWidth={1.600} className="ml-[10px] text-[#5f6268]" />
        <ExternalLink size={16} strokeWidth={1.600} className="ml-[10px] text-[#5f6268]" />
      </div>
      <div className="h-[1056px] shrink-0 bg-[#0b0c10]">
        <div className="relative h-[1056px] overflow-hidden rounded-xl bg-[linear-gradient(135deg,#2f3644_0%,#2d3138_22%,#272727_48%,#2c262f_56%,#432b56_78%,#572f7d_100%)]">
          <div className="absolute -top-10 -left-10 h-28 w-40 rounded-full bg-[#474b5a] blur-2xl" />
          <div className="absolute -top-8 left-0 h-32 w-[1395px] bg-[#424345] opacity-90 blur-2xl" />
          <div className="absolute -top-5 left-[218px] h-20 w-20 rounded-full bg-[#565a65] opacity-80 blur-xl" />
          <div className="absolute -top-6 left-[470px] h-16 w-16 rounded-full bg-[#524b40] opacity-80 blur-xl" />
          <div className="absolute -top-5 left-[1070px] h-20 w-44 rounded-2xl bg-[#525355] blur-xl" />
          <div className="absolute -top-5 left-[1250px] h-20 w-14 rounded-full bg-[#57493a] opacity-80 blur-xl" />
          <div className="absolute top-[85px] left-[85px] h-20 w-20 rounded-full bg-[#4d525c] opacity-90 blur-xl" />
          <div className="absolute top-[95px] left-[1090px] h-14 w-52 rounded-xl bg-[#474749] blur-2xl" />
          <div className="absolute top-[305px] left-[95px] h-32 w-64 rounded-xl bg-[#3f4144] blur-2xl" />
          <div className="absolute top-[310px] left-[1065px] h-32 w-32 rounded-full bg-[#5c595a] opacity-80 blur-2xl" />
          <div className="absolute top-[420px] left-[1050px] h-80 w-60 rounded-3xl bg-[#544a55] opacity-70 blur-[40px]" />
          <div className="absolute top-[955px] left-[1292px] h-20 w-20 rounded-full bg-[#4d5586] opacity-90 blur-xl" />
          <div className="absolute inset-0 rounded-xl border border-white/15" />
          <ShareDialog />
        </div>
      </div>
    </div>
  );
}

export default function App() {
  return (
    <div className="flex h-[1260px] w-[2240px] flex-col overflow-hidden bg-[#eaebed] font-['IBM_Plex_Sans','Noto_Sans',sans-serif] [zoom:1.828571]">
      <BrowserChrome />
      <Header />
      <div className="flex h-[1132px]">
        <Rail />
        <AgentPane />
        <div className="flex w-[6.500px] shrink-0 justify-center"><span className="mt-[550px] h-6 w-[2px] rounded-full bg-[#cdd0d4]" /></div>
        <PreviewPane />
      </div>
    </div>
  );
}
